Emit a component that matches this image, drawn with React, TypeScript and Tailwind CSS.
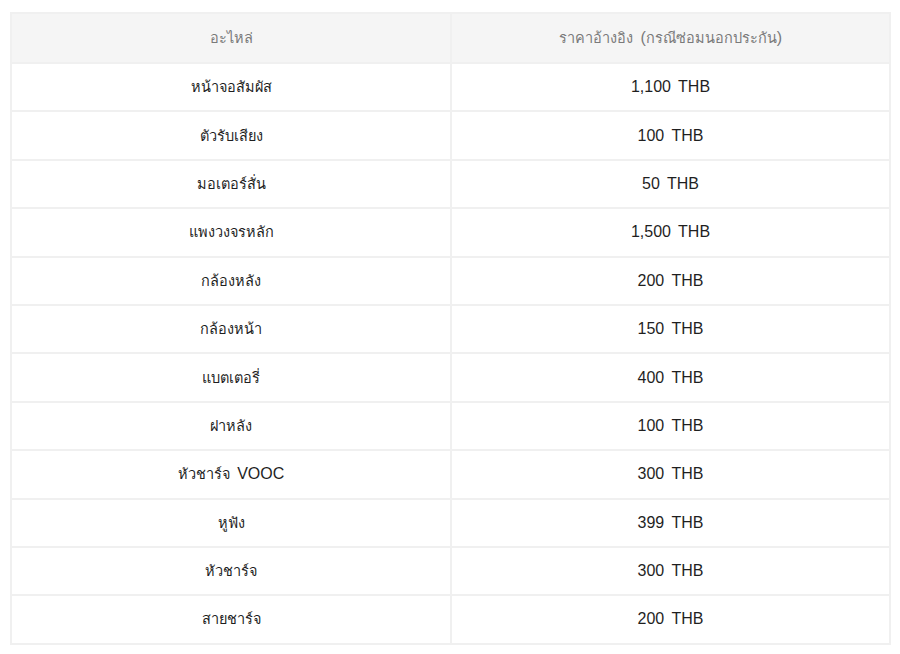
import React from 'react';

const rows = [
  { part: 'หน้าจอสัมผัส', price: '1,100 THB' },
  { part: 'ตัวรับเสียง', price: '100 THB' },
  { part: 'มอเตอร์สั่น', price: '50 THB' },
  { part: 'แพงวงจรหลัก', price: '1,500 THB' },
  { part: 'กล้องหลัง', price: '200 THB' },
  { part: 'กล้องหน้า', price: '150 THB' },
  { part: 'แบตเตอรี่', price: '400 THB' },
  { part: 'ฝาหลัง', price: '100 THB' },
  { part: 'หัวชาร์จ VOOC', price: '300 THB' },
  { part: 'หูฟัง', price: '399 THB' },
  { part: 'หัวชาร์จ', price: '300 THB' },
  { part: 'สายชาร์จ', price: '200 THB' },
];

// Thai glyphs from the fallback font run wide, so Thai runs get a smaller size
function Txt({ text }: { text: string }) {
  const parts = text.split(/([\u0E00-\u0E7F]+)/).filter(Boolean);
  return (
    <>
      {parts.map((p, i) =>
        /[\u0E00-\u0E7F]/.test(p) ? (
          <span key={i} className="text-[14.5px]">{p}</span>
        ) : (
          <span key={i}>{p}</span>
        )
      )}
    </>
  );
}

export default function App() {
  return (
    <div className="w-[900px] h-[654px] bg-white pt-3 pl-[10px] font-['Liberation_Sans',sans-serif]">
      <table className="w-[881px] border-collapse text-center text-[16px] [word-spacing:3px]">
        <thead>
          <tr className="bg-[#f5f5f5] text-[#7a7a7a] h-[50px]">
            <th className="font-normal border-2 border-[#f0f0f0] w-[440px]"><Txt text="อะไหล่" /></th>
            <th className="font-normal border-2 border-[#f0f0f0]"><Txt text="ราคาอ้างอิง (กรณีซ่อมนอกประกัน)" /></th>
          </tr>
        </thead>
        <tbody>
          {rows.map((r) => (
            <tr key={r.part} className="h-[48.4px] text-[#1f1f1f]">
              <td className="border-2 border-[#f0f0f0]"><Txt text={r.part} /></td>
              <td className="border-2 border-[#f0f0f0]"><Txt text={r.price} /></td>
            </tr>
          ))}
        </tbody>
      </table>
    </div>
  );
}
